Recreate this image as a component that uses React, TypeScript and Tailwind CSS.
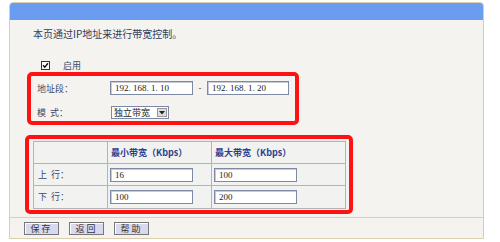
import React from 'react'

const cjk = { fontFamily: '"Noto Sans CJK SC", "Liberation Sans", sans-serif' }
const num = { fontFamily: '"Liberation Serif", "Noto Sans CJK SC", serif' }

function TextBox({ value, w }: { value: string; w: string }) {
  return (
    <div
      className={`${w} h-[14px] border border-[#7d8aa6] bg-white pl-[4px] text-[9px] leading-[12px] text-[#222] shadow-[inset_1px_1px_0_#c8cbd6]`}
      style={num}
    >
      {value}
    </div>
  )
}

function Btn({ label }: { label: string }) {
  return (
    <div
      className="flex h-[13px] w-[35px] items-center justify-center border border-[#777] bg-[#d8d8ee] text-[9px] leading-none tracking-[2px] text-[#333] shadow-[inset_1px_1px_0_#fff]"
      style={cjk}
    >
      {label}
    </div>
  )
}

export default function App() {
  return (
    <div className="h-[242px] w-[500px] overflow-hidden bg-white pl-[9px] pt-[2px]">
      <div className="h-[237px] w-[475px] rounded-t-[4px] border border-[#d9cfae] bg-[#f4f3ef]">
        <div className="h-[17px] rounded-t-[3px] bg-[#6a9cf0]" />

        <p className="ml-[23px] mt-[8px] text-[10px] leading-[12px] text-[#2f3c5e]" style={cjk}>
          本页通过IP地址来进行带宽控制。
        </p>

        <div className="ml-[31px] mt-[19px] flex h-[12px] items-center gap-[13px]">
          <svg width="9" height="9" viewBox="0 0 9 9">
            <rect x="0.5" y="0.5" width="8" height="8" fill="#fff" stroke="#333" />
            <path d="M2 4.2 L3.8 6.2 L7 2.2" fill="none" stroke="#111" strokeWidth="1.4" />
          </svg>
          <span className="text-[9px] leading-none text-[#3a4a6a]" style={cjk}>
            启用
          </span>
        </div>

        <div className="ml-[17px] mt-[1px] h-[53px] w-[272px] rounded-[5px] border-4 border-[#ff1212] pl-[6px] pt-[5px]">
          <div className="flex h-[14px] items-center">
            <span className="w-[73px] text-[9px] leading-none text-[#3a4a6a]" style={cjk}>
              地址段：
            </span>
            <TextBox value="192. 168. 1. 10" w="w-[83px]" />
            <span className="w-[14px] text-center text-[9px] text-[#555]">-</span>
            <TextBox value="192. 168. 1. 20" w="w-[82px]" />
          </div>
          <div className="mt-[11px] flex h-[13px] items-center">
            <span className="w-[74px] text-[9px] leading-none text-[#3a4a6a]" style={cjk}>
              模&nbsp;&nbsp;式：
            </span>
            <div className="flex h-[13px] w-[58px] items-center border border-[#7d8aa6] bg-white">
              <span className="flex-1 pl-[2px] text-[9px] leading-none text-[#222]" style={cjk}>
                独立带宽
              </span>
              <div className="mr-[1px] flex h-[9px] w-[10px] items-center justify-center border border-[#999] bg-[#ddd]">
                <svg width="6" height="4" viewBox="0 0 6 4">
                  <path d="M0 0 L6 0 L3 3.5 Z" fill="#222" />
                </svg>
              </div>
            </div>
          </div>
        </div>

        <div className="ml-[15px] mt-[10px] h-[79px] w-[328px] rounded-[5px] border-4 border-[#ff1212] pl-[4px] pt-[2px]">
          <table className="w-[313px] border-collapse text-[9px]" style={cjk}>
            <tbody>
              <tr className="h-[22px]">
                <td className="w-[74px] border border-[#b4b4b4] bg-[#f2f2f0]" />
                <td className="w-[104px] border border-[#b4b4b4] bg-[#f2f2f0] pl-[3px] font-bold text-[#2a3f8f]">
                  最小带宽（Kbps）
                </td>
                <td className="border border-[#b4b4b4] bg-[#f2f2f0] pl-[3px] font-bold text-[#2a3f8f]">
                  最大带宽（Kbps）
                </td>
              </tr>
              <tr className="h-[22px]">
                <td className="border border-[#b4b4b4] bg-[#f2f2f0] pl-[4px] text-[#3a4a6a]">上&nbsp;&nbsp;行：</td>
                <td className="border border-[#b4b4b4] bg-[#f2f2f0] pl-[2px]">
                  <TextBox value="16" w="w-[83px]" />
                </td>
                <td className="border border-[#b4b4b4] bg-[#f2f2f0] pl-[2px]">
                  <TextBox value="100" w="w-[83px]" />
                </td>
              </tr>
              <tr className="h-[23px]">
                <td className="border border-[#b4b4b4] bg-[#f2f2f0] pl-[4px] text-[#3a4a6a]">下&nbsp;&nbsp;行：</td>
                <td className="border border-[#b4b4b4] bg-[#f2f2f0] pl-[2px]">
                  <TextBox value="100" w="w-[83px]" />
                </td>
                <td className="border border-[#b4b4b4] bg-[#f2f2f0] pl-[2px]">
                  <TextBox value="200" w="w-[83px]" />
                </td>
              </tr>
            </tbody>
          </table>
        </div>

        <div className="mt-[3px] border-t border-[#d9cfae]" />

        <div className="ml-[14px] mt-[4px] flex gap-[10px]">
          <Btn label="保存" />
          <Btn label="返回" />
          <Btn label="帮助" />
        </div>
      </div>
    </div>
  )
}
